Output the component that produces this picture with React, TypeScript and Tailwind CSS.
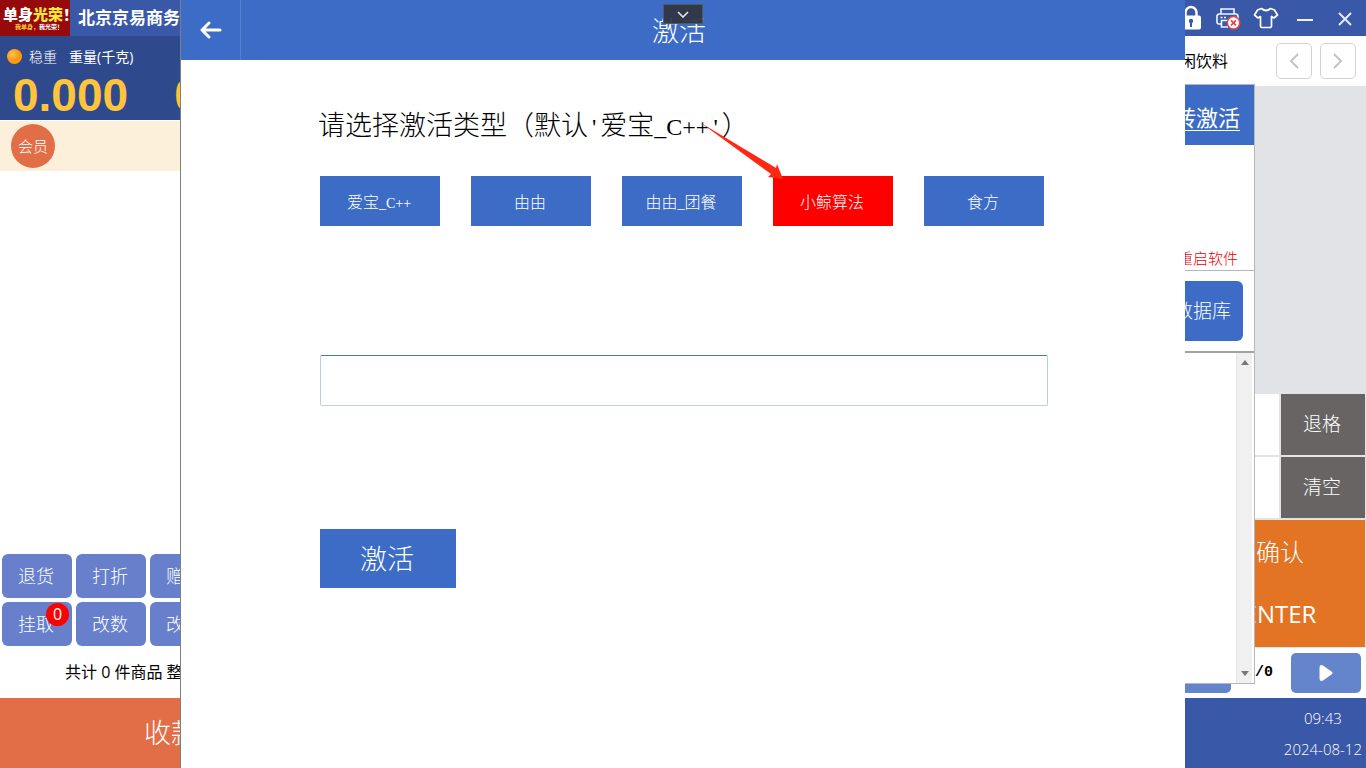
import React from "react";

const uiFont = "font-['Open_Sans','Noto_Sans_CJK_SC',sans-serif]";

function Half({ children, className }: { children: string; className: string }) {
  return <span className={`font-['Liberation_Serif',serif] leading-none ${className}`}>{children}</span>;
}

function TitleBar() {
  return (
    <header className="flex h-9 items-center bg-[#3a58a8] text-white">
      <div className="flex h-9 w-[70px] shrink-0 flex-col justify-center overflow-hidden whitespace-nowrap bg-[#960a0c] pl-[3px]">
        <p className="text-[15px] leading-[18px] font-black">
          单身<span className="text-[#ffe838]">光荣</span>！
        </p>
        <p className="pl-3 text-[6px] leading-[8px] font-bold">
          <span className="text-[#ffd23c]">我单身，</span>我光荣！
        </p>
      </div>
      <h1 className="ml-2 text-[17px] leading-9 font-bold">北京京易商务</h1>
      <nav className="ml-auto flex h-9 items-center pr-[13px]">
        <button aria-label="锁屏" className="mr-3">
          <svg width="24" height="26" viewBox="0 0 24 26">
            <path d="M6.500 12V7.500a5.500 5.500 0 0 1 11 0V12" fill="none" stroke="#fff" strokeWidth="2.400" />
            <rect x="2" y="10.500" width="20" height="14" rx="2" fill="#fff" />
            <circle cx="12" cy="16" r="2.200" fill="#3a58a8" />
            <path d="M11 16h2v6h-2z" fill="#3a58a8" />
          </svg>
        </button>
        <button aria-label="打印机" className="mr-3">
          <svg width="26" height="24" viewBox="0 0 26 24" fill="none" stroke="#f2f5ff" strokeWidth="1.600">
            <path d="M6 8V3h13v5M6 18H4q-2 0-2-2v-5.500Q2 8 4.500 8h16Q23 8 23 10.500V13" />
            <path d="M14 14.500H6.500V21H13" />
            <path d="M5.500 11.500h2M9 11.500h2" />
            <circle cx="18.500" cy="16.800" r="6.200" fill="#fff" stroke="#e84545" strokeWidth="1.500" />
            <path d="m16 14.300 5 5m0-5-5 5" stroke="#e84545" strokeWidth="1.700" />
          </svg>
        </button>
        <button aria-label="换肤" className="mr-[18px]">
          <svg width="26" height="22" viewBox="0 0 26 22" fill="none" stroke="#fff" strokeWidth="1.700" strokeLinejoin="round">
            <path d="M8.500 1.500Q13 5.500 17.500 1.500L21.500 3l3 5-3.500 3-2.500-1.500V19q0 1.500-1.500 1.500H9q-1.500 0-1.500-1.500V9.500L5 11 1.500 8l3-5z" />
          </svg>
        </button>
        <button aria-label="最小化" className="mr-6">
          <svg width="16" height="20" viewBox="0 0 16 20"><path d="M0 12h16" stroke="#f0f3ff" strokeWidth="2" /></svg>
        </button>
        <button aria-label="关闭">
          <svg width="16" height="16" viewBox="0 0 16 16"><path d="m2 3 12 12M14 3 2 15" stroke="#e8edfc" strokeWidth="1.900" /></svg>
        </button>
      </nav>
    </header>
  );
}

const actions = ["退货", "打折", "赠送", "挂取", "改数", "改价"];

function OrderPanel() {
  return (
    <section className="flex w-[420px] shrink-0 flex-col">
      <div className="h-[84px] bg-[#2f4a8c]">
        <div className="flex h-10 items-center pl-[7px] text-[14px] text-white">
          <span className="mr-[7px] size-[15px] rounded-full bg-[radial-gradient(circle_at_35%_35%,#ffc45c,#ff9a12_45%)]" />
          <span className="mr-3 font-light">稳重</span>
          <span>重量(千克)</span>
        </div>
        <div className="flex gap-[46px] pl-[13px] font-['Liberation_Sans',sans-serif] text-[46px] leading-[38px] font-bold text-[#fdc43c]">
          <span>0.000</span>
          <span>0.00</span>
        </div>
      </div>
      <div className="mt-px flex h-[50px] items-center bg-[#fdf0da] pl-[11px]">
        <button className="size-11 rounded-full bg-[#e26e48] text-[15px] font-light text-white">会员</button>
      </div>
      <div className="flex-1" />
      <div className="grid grid-cols-[70px_70px_70px] gap-1 pl-0.5">
        {actions.map((label) => (
          <button key={label} className="relative h-11 rounded-md bg-[#6880cc] pr-0.5 text-[18px] font-light text-white">
            {label}
            {label === "挂取" && (
              <span className="absolute top-px right-[3px] size-[23px] rounded-full bg-[#ff0000] text-[16px] leading-[23px] font-normal">0</span>
            )}
          </button>
        ))}
      </div>
      <p className="h-[52px] pl-[65px] text-[16px] leading-[52px] text-black">共计 0 件商品 整单</p>
      <button className="h-[70px] bg-[#e26e48] pl-[144px] text-left text-[27px] font-light text-white">收款</button>
    </section>
  );
}

function ProductPanel() {
  const keyStyle = "h-[61px] pr-0.5 text-[19px] font-light";
  return (
    <section className="flex flex-1 flex-col items-end bg-white">
      <div className="flex h-[50px] items-center pr-[10px]">
        <span className="mr-[48px] text-[16px] text-black">休闲饮料</span>
        <button aria-label="上一页" className="mr-2 grid size-9 place-items-center rounded-[5px] border border-[#cfd1d6]">
          <svg width="10" height="16" viewBox="0 0 10 16" fill="none" stroke="#bfc1c6" strokeWidth="1.800"><path d="M9 1 2 8l7 7" /></svg>
        </button>
        <button aria-label="下一页" className="grid size-9 place-items-center rounded-[5px] border border-[#cfd1d6]">
          <svg width="10" height="16" viewBox="0 0 10 16" fill="none" stroke="#bfc1c6" strokeWidth="1.800"><path d="m1 1 7 7-7 7" /></svg>
        </button>
      </div>
      <div className="w-full flex-1 bg-[#e1e3e6]" />
      <div className="grid w-full grid-cols-[1fr_84px_84px] gap-0.5 bg-[#e1e3e6] pr-px pb-px">
        <span className="bg-white" />
        <span className="bg-white" />
        <button className={`bg-[#686463] text-white ${keyStyle}`}>退格</button>
        <span className="bg-white" />
        <span className="bg-white" />
        <button className={`bg-[#686463] text-white ${keyStyle}`}>清空</button>
        <span className="bg-white" />
        <button className="col-span-2 h-[127px] bg-[#e27424] pb-0.5 text-[24px] leading-[62px] font-light text-white">
          <span className="block">确认</span>
          <span className="block font-normal">ENTER</span>
        </button>
      </div>
      <div className="flex h-[50px] items-center pr-[5px]">
        <button aria-label="向前" className="h-10 w-[70px] rounded-[5px] bg-[#6484cc]" />
        <span className="w-[60px] pr-[18px] text-right font-['Liberation_Mono',monospace] text-[15px] font-bold text-black">0/0</span>
        <button aria-label="向后" className="grid h-10 w-[70px] place-items-center rounded-[5px] bg-[#6484cc]">
          <svg width="14" height="16" viewBox="0 0 14 16"><path d="M0.500 3Q0.500-1 4 0.500l8.500 6q2 1.500 0 3L4 15.500q-3.500 1.500-3.500-2.500z" fill="#fff" /></svg>
        </button>
      </div>
      <footer className="flex h-[70px] w-full justify-end bg-[#3a58a8] pt-[5px] pr-1 text-center text-[15px] leading-[31px] font-light text-white">
        <div>
          <p>09:43</p>
          <p>2024-08-12</p>
        </div>
      </footer>
    </section>
  );
}

function SettingsWindow() {
  return (
    <section className="absolute top-[84px] right-[111px] bottom-[84px] flex w-[500px] flex-col border border-[#b4b6ba] bg-white">
      <div className="h-[60px] bg-[#3c6cc6] pr-[14px] text-right text-[22px] leading-[64px] text-white">
        <a href="#activate" className="underline decoration-1 underline-offset-[4px]">中转激活</a>
      </div>
      <div className="flex h-[126px] items-end justify-end border-b border-[#b4b6ba] pr-4 text-[15px] leading-[24px] font-light text-[#e60000]">请重启软件</div>
      <div className="flex h-20 items-center justify-end pr-[11px]">
        <button className="h-[60px] w-[120px] rounded-md bg-[#3c6cc6] pr-3 text-right text-[19px] font-light text-white">备份数据库</button>
      </div>
      <div className="flex flex-1 justify-end border-t-2 border-[#a0a2a6] pr-0.5">
        <div className="flex w-4 flex-col items-center justify-between border-l border-[#e4e4e4] bg-[#f0f0f0] py-[7px]">
          <svg width="8" height="5" viewBox="0 0 8 5"><path d="m4 0 4 5H0z" fill="#777" /></svg>
          <svg width="8" height="5" viewBox="0 0 8 5"><path d="M0 0h8L4 5z" fill="#777" /></svg>
        </div>
      </div>
    </section>
  );
}

const types = [
  { name: "爱宝", suffix: "_C++" },
  { name: "由由" },
  { name: "由由", suffix: "_", tail: "团餐" },
  { name: "小鲸算法", selected: true },
  { name: "食方" },
];

function ActivationWindow() {
  return (
    <main className="absolute inset-y-0 right-[181px] left-[180px] flex flex-col border-l border-[#7c7f84] bg-white font-['Noto_Sans_CJK_SC',sans-serif]">
      <header className="relative flex h-[60px] shrink-0 items-center bg-[#3c6cc6] text-white">
        <button aria-label="返回" className="grid h-[60px] w-[60px] place-items-center border-r border-[#5580d0]">
          <svg width="22" height="18" viewBox="0 0 22 18" fill="none" stroke="#fff" strokeWidth="3" strokeLinecap="round" strokeLinejoin="round">
            <path d="M9 2 2 9l7 7M3 9h17" />
          </svg>
        </button>
        <h2 className="flex-1 pr-[68px] text-center text-[27px] leading-[58px] font-light">激活</h2>
        <button aria-label="展开工具栏" className="absolute top-1 left-[482px] grid h-5 w-10 place-items-center border border-[#55585c] bg-[#303642]/95">
          <svg width="12" height="7" viewBox="0 0 12 7" fill="none" stroke="#e8e8e8" strokeWidth="1.600"><path d="m1 1 5 5 5-5" /></svg>
        </button>
      </header>
      <div className="pt-[44px] pr-[137px] pl-[139px]">
        <label htmlFor="code" className="-ml-0.5 block h-10 text-[27px] leading-10 font-light whitespace-nowrap text-black">
          请选择激活类型（默认<Half className="px-1 text-[24px]">'</Half>爱宝<Half className="text-[24px]">_C++</Half><Half className="px-1 text-[24px]">'</Half>）
        </label>
        <div className="mt-8 flex gap-[31px]">
          {types.map((type, index) => (
            <div key={index} className="relative">
              <button className={`h-[50px] w-[120px] pr-0.5 text-[16px] font-light text-white ${type.selected ? "bg-[#ff0000]" : "bg-[#3c6cc6]"}`}>
                {type.name}
                {type.suffix && <Half className="text-[14px]">{type.suffix}</Half>}
                {type.tail}
              </button>
              {type.selected && (
                <svg className="pointer-events-none absolute -top-[54px] -left-[74px]" width="84" height="58" viewBox="0 0 84 58">
                  <path d="M2 1 77 46l1-4 6 15-15-2 3-3z" fill="#ff2814" />
                </svg>
              )}
            </div>
          ))}
        </div>
        <input id="code" type="text" className="mt-[129px] block h-[51px] w-full rounded-[2px] border border-[#b8d0e4] border-t-[#4a7c96] px-3 text-[20px] outline-none" />
        <button className="mt-[123px] h-[59px] w-[136px] bg-[#3c6cc6] pr-0.5 text-[27px] font-light text-white">激活</button>
      </div>
    </main>
  );
}

export default function App() {
  return (
    <div className={`relative flex min-h-screen flex-col overflow-hidden bg-white ${uiFont}`}>
      <TitleBar />
      <div className="flex flex-1">
        <OrderPanel />
        <ProductPanel />
      </div>
      <SettingsWindow />
      <ActivationWindow />
    </div>
  );
}
